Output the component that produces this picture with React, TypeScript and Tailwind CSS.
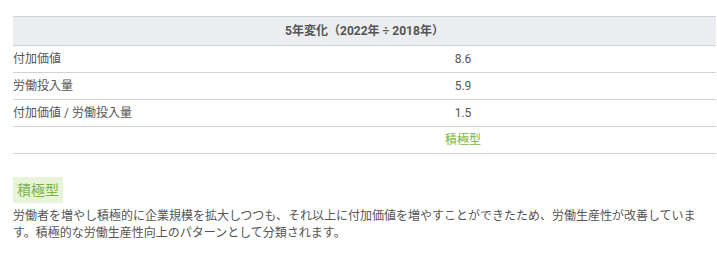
export default function App() {
  const items = [
    { label: '付加価値', value: '8.6' },
    { label: '労働投入量', value: '5.9' },
    { label: '付加価値 / 労働投入量', value: '1.5' },
  ]

  return (
    <div className="bg-white pt-4 pl-[13px] pr-px text-[#555] font-['Roboto','Noto_Sans_CJK_JP',sans-serif] text-[12px]">
      <table className="w-full border-collapse border-t border-[#cfd3d8]">
        <thead>
          <tr className="bg-[#ebedf0]">
            <th colSpan={2} className="h-[29px] border-b border-[#cfd3d8] text-center font-bold text-[12px] text-[#555]">
              5年変化（2022年 ÷ 2018年）
            </th>
          </tr>
        </thead>
        <tbody>
          {items.map((r) => (
            <tr key={r.label}>
              <td className="w-[197px] h-[27px] border-b border-[#cfd3d8] p-0 text-left">{r.label}</td>
              <td className="h-[27px] border-b border-[#cfd3d8] p-0 text-center">{r.value}</td>
            </tr>
          ))}
          <tr>
            <td className="w-[197px] h-[27px] border-b border-[#cfd3d8] p-0"></td>
            <td className="h-[27px] border-b border-[#cfd3d8] p-0 text-center text-[#7cb342]">積極型</td>
          </tr>
        </tbody>
      </table>

      <div className="mt-[23px] flex">
        <span className="h-[26px] px-1 leading-[26px] text-[14px] bg-[#e7f4da] text-[#7cb342]">積極型</span>
      </div>
      <p className="w-[690px] mt-[5px] leading-[17px] text-[12px] text-[#555]">
        労働者を増やし積極的に企業規模を拡大しつつも、それ以上に付加価値を増やすことができたため、労働生産性が改善しています。積極的な労働生産性向上のパターンとして分類されます。
      </p>
    </div>
  )
}
